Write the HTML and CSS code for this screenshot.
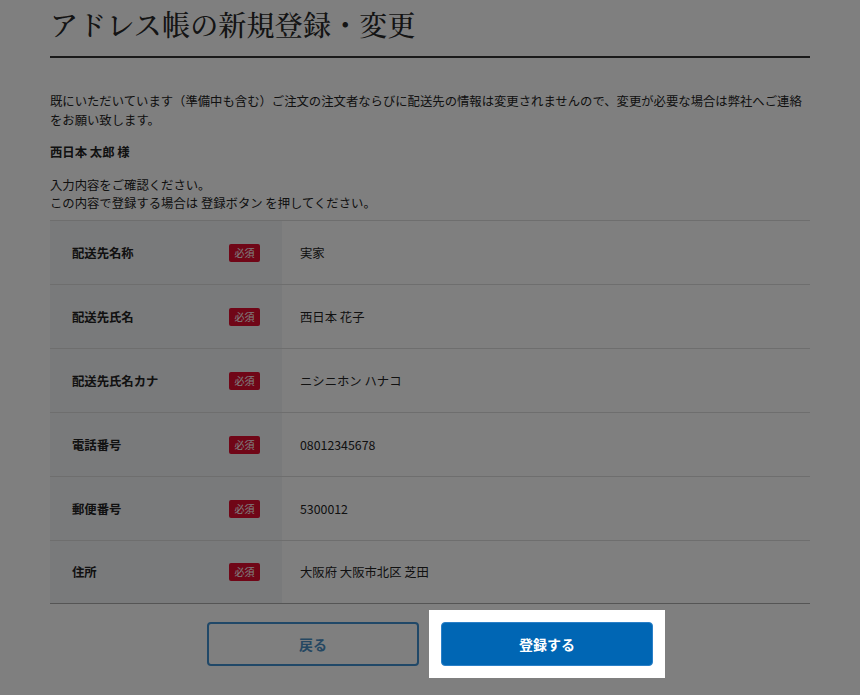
FILE: index.html
```html
<!DOCTYPE html>
<html lang="ja">
<head>
<meta charset="utf-8">
<title>アドレス帳の新規登録・変更</title>
<link rel="stylesheet" href="styles.css">
</head>
<body>
<main class="page">
  <h1 class="title">アドレス帳の新規登録・変更</h1>
  <p class="notice">既にいただいています（準備中も含む）ご注文の注文者ならびに配送先の情報は変更されませんので、変更が必要な場合は弊社へご連絡をお願い致します。</p>
  <p class="customer">西日本 太郎 様</p>
  <p class="confirm">入力内容をご確認ください。<br>この内容で登録する場合は 登録ボタン を押してください。</p>
  <div class="table">
    <div class="row"><div class="label"><span>配送先名称</span><span class="badge">必須</span></div><div class="value">実家</div></div>
    <div class="row"><div class="label"><span>配送先氏名</span><span class="badge">必須</span></div><div class="value">西日本 花子</div></div>
    <div class="row"><div class="label"><span>配送先氏名カナ</span><span class="badge">必須</span></div><div class="value">ニシニホン ハナコ</div></div>
    <div class="row"><div class="label"><span>電話番号</span><span class="badge">必須</span></div><div class="value">08012345678</div></div>
    <div class="row"><div class="label"><span>郵便番号</span><span class="badge">必須</span></div><div class="value">5300012</div></div>
    <div class="row"><div class="label"><span>住所</span><span class="badge">必須</span></div><div class="value">大阪府 大阪市北区 芝田</div></div>
  </div>
  <div class="actions">
    <button class="btn btn-back" type="button">戻る</button>
    <div class="spotlight">
      <button class="btn btn-submit" type="button">登録する</button>
    </div>
  </div>
</main>
</body>
</html>
```
FILE: styles.css
```css
html, body {
  margin: 0;
  padding: 0;
  background: #fff;
  overflow: hidden;
  height: 100%;
}
body {
  font-family: "Noto Sans CJK JP", "Noto Sans", sans-serif;
  color: #222;
  font-size: 12.35px;
  min-height: 695px;
}
.page {
  width: 760px;
  margin: 0 auto;
}
.title {
  font-family: "Noto Serif CJK JP", "Noto Sans CJK JP", serif;
  font-size: 28px;
  font-weight: 500;
  line-height: 39px;
  margin: 5px 0 0;
  padding: 0 0 12px;
  border-bottom: 2px solid #333;
  color: #282828;
  letter-spacing: 0.2px;
}
.notice {
  margin: 34px 0 0;
  line-height: 19px;
}
.customer {
  margin: 13px 0 0;
  line-height: 19px;
  font-weight: 700;
}
.confirm {
  margin: 14px 0 0;
  line-height: 18px;
}
.table {
  margin-top: 8px;
  border-top: 1px solid #ddd;
  border-bottom: 1px solid #aaa;
}
.row {
  display: flex;
  height: 63px;
  border-bottom: 1px solid #ddd;
}
.row:last-child {
  border-bottom: none;
  height: 62px;
}
.label {
  width: 232px;
  box-sizing: border-box;
  background: #f3f4f7;
  padding: 0 22px;
  display: flex;
  align-items: center;
  justify-content: space-between;
  font-weight: 700;
}
.badge {
  background: #e00c2e;
  color: #fff;
  font-size: 10px;
  font-weight: 400;
  width: 31px;
  height: 18px;
  line-height: 18px;
  text-align: center;
  border-radius: 2px;
}
.value {
  display: flex;
  align-items: center;
  padding-left: 18px;
}
.actions {
  display: flex;
  justify-content: center;
  align-items: center;
  gap: 22px;
  margin-top: 18px;
}
.btn {
  width: 212px;
  height: 44px;
  border-radius: 4px;
  font-family: "Noto Sans CJK JP", sans-serif;
  font-size: 14px;
  font-weight: 700;
  box-sizing: border-box;
  cursor: pointer;
}
.btn-back {
  background: #fff;
  border: 2px solid #4090d0;
  color: #4a8fc4;
}
.spotlight {
  position: relative;
  z-index: 10;
  background: #fff;
  padding: 12px;
  margin: -12px;
  box-shadow: 0 0 0 3000px rgba(0, 0, 0, 0.5);
}
.btn-submit {
  display: block;
  background: #0066b4;
  border: 1px solid #2a80c8;
  color: #fff;
}
```
